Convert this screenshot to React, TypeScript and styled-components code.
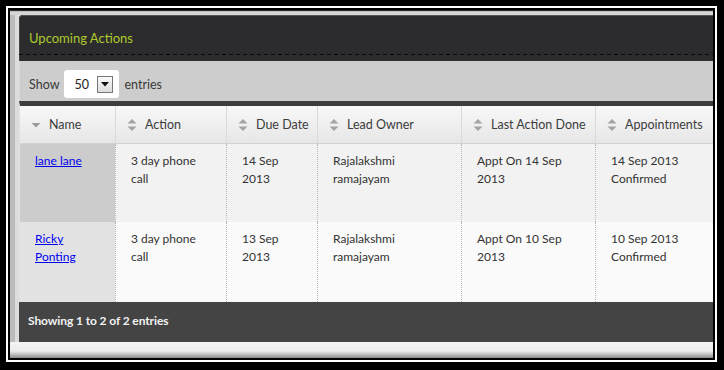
import React from 'react';
import styled, { createGlobalStyle } from 'styled-components';

const GlobalStyle = createGlobalStyle`
  html, body { margin: 0; padding: 0; background: #000; }
  body { font-family: Lato, "Noto Sans", sans-serif; }
`

const Frame = styled.div`
  width: 724px;
  height: 370px;
  box-sizing: border-box;
  padding: 6px 7px 8px 6px;
  background: #000;
`
const Bezel = styled.div`
  height: 100%;
  box-sizing: border-box;
  border: 2px solid #fff;
`
const Stage = styled.div`
  height: 100%;
  box-sizing: border-box;
  border: 2px solid #000;
  overflow: hidden;
  padding: 5px 0 0 9px;
  background:
    linear-gradient(to bottom, transparent calc(100% - 16px), #f3f3f3 calc(100% - 16px), #ececec calc(100% - 7px), #8c8c8c 100%),
    linear-gradient(to bottom, #2a2a2a 0 1px, #bdbdbd 1px 2px, #d6d6d6 2px 100%),
    linear-gradient(90deg, #bcbcbc 0 5px, #dcdcdc 5px 100%);
  background-size: 100% 100%, 100% 5px, 100% 100%;
  background-repeat: no-repeat;
`
const Panel = styled.div`
  width: 706px;
  height: 327px;
  display: flex;
  flex-direction: column;
  background: #f2f2f2;
`
const Header = styled.div`
  height: 46px;
  box-sizing: border-box;
  padding: 0 0 0 10px;
  display: flex;
  flex-direction: column;
  border-radius: 4px 4px 0 0;
  background: #2c2c2f;
  box-shadow: inset 0 1px 0 #555, inset 1px 0 0 #444;
`
const TitleRow = styled.div`
  height: 39px;
  display: flex;
  align-items: center;
  padding-top: 7px;
  box-sizing: border-box;
`
const Title = styled.div`
  color: #adc92b;
  font-size: 13px;
`
const Dashes = styled.div`
  height: 1px;
  margin-left: -10px;
  background: repeating-linear-gradient(90deg, #0a0a0a 0 4px, transparent 4px 7px);
`
const Toolbar = styled.div`
  height: 40px;
  box-sizing: border-box;
  padding: 9px 0 3px 9px;
  display: flex;
  align-items: center;
  gap: 5px;
  background: #cdcdcd;
  border-left: 1px solid #d9d9d9;
  color: #3a3a3a;
  font-size: 12.5px;
`
const Select = styled.div`
  width: 55px;
  height: 28px;
  box-sizing: border-box;
  padding: 0 6px 0 10px;
  display: flex;
  align-items: center;
  justify-content: space-between;
  background: #fff;
  border-radius: 3px;
  color: #222;
  font-size: 12.5px;
`
const SelectButton = styled.div`
  width: 16px;
  height: 17px;
  box-sizing: border-box;
  border: 1px solid #777;
  background: linear-gradient(#fafafa, #dcdcdc);
  display: flex;
  align-items: center;
  justify-content: center;
`
const Table = styled.table`
  width: 705px;
  table-layout: fixed;
  border-spacing: 0;
  border-top: 5px solid #3d3d3d;
  border-left: 1px solid #e2e2e2;
  font-size: 12px;
`
const HeadCell = styled.th`
  height: 38px;
  box-sizing: border-box;
  padding: 0 0 0 11px;
  text-align: left;
  font-weight: normal;
  font-size: 12.5px;
  color: #3c3c3c;
  white-space: nowrap;
  background: linear-gradient(#f8f8f8, #e6e6e6);
  border-bottom: 1px solid #d2d2d2;
  & + & { border-left: 1px solid #dadada; }
`
const HeadInner = styled.div`
  display: flex;
  align-items: center;
  gap: 8px;
`
const Cell = styled.td<{ $sorted?: boolean; $odd?: boolean }>`
  height: ${p => (p.$odd ? 78 : 80)}px;
  box-sizing: border-box;
  vertical-align: top;
  padding: 8px 10px 0 15px;
  line-height: 18px;
  color: #333;
  background: ${p => (p.$sorted ? (p.$odd ? '#cccccc' : '#e2e2e2') : p.$odd ? '#f2f2f2' : '#fafafa')};
  & + & { border-left: 1px dotted #b8b8b8; }
`
const NameLink = styled.a`
  color: #0000ee;
  text-decoration: underline;
`
const Footer = styled.div`
  height: 40px;
  box-sizing: border-box;
  padding: 10px 0 0 9px;
  line-height: 18px;
  background: #444;
  color: #f2f2f2;
  font-size: 12px;
  font-weight: bold;
  letter-spacing: -0.1px;
`

const SortBoth = () => (
  <svg width="10" height="14" viewBox="0 0 10 14">
    <path d="M0.5 5.5 L5 1 L9.5 5.5 Z" fill="#a4a4a4" />
    <path d="M0.5 8.5 L5 13 L9.5 8.5 Z" fill="#a4a4a4" />
  </svg>
)

const SortDesc = () => (
  <svg width="10" height="14" viewBox="0 0 10 14">
    <path d="M0.5 5 L5 9.5 L9.5 5 Z" fill="#9c9c9c" />
  </svg>
)

const columns = [
  { label: 'Name', width: 95, sorted: true },
  { label: 'Action', width: 111 },
  { label: 'Due Date', width: 91 },
  { label: 'Lead Owner', width: 144 },
  { label: 'Last Action Done', width: 134 },
  { label: 'Appointments', width: 130 },
]

const rows = [
  ['lane lane', '3 day phone call', '14 Sep 2013', 'Rajalakshmi ramajayam', 'Appt On 14 Sep 2013', '14 Sep 2013 Confirmed'],
  ['Ricky Ponting', '3 day phone call', '13 Sep 2013', 'Rajalakshmi ramajayam', 'Appt On 10 Sep 2013', '10 Sep 2013 Confirmed'],
]

export default function App() {
  return (
    <Frame>
      <GlobalStyle />
      <Bezel>
        <Stage>
          <Panel>
            <Header>
              <TitleRow>
                <Title>Upcoming Actions</Title>
              </TitleRow>
              <Dashes />
            </Header>
            <Toolbar>
              <span>Show</span>
              <Select>
                <span>50</span>
                <SelectButton>
                  <svg width="8" height="5" viewBox="0 0 8 5">
                    <path d="M0 0 L8 0 L4 4.5 Z" fill="#111" />
                  </svg>
                </SelectButton>
              </Select>
              <span>entries</span>
            </Toolbar>
            <Table>
              <colgroup>
                {columns.map(c => <col key={c.label} style={{ width: c.width }} />)}
              </colgroup>
              <thead>
                <tr>
                  {columns.map(c => (
                    <HeadCell key={c.label}>
                      <HeadInner>
                        {c.sorted ? <SortDesc /> : <SortBoth />}
                        <span>{c.label}</span>
                      </HeadInner>
                    </HeadCell>
                  ))}
                </tr>
              </thead>
              <tbody>
                {rows.map((r, i) => (
                  <tr key={i}>
                    {r.map((v, j) => (
                      <Cell key={j} $sorted={j === 0} $odd={i === 0}>
                        {j === 0 ? <NameLink href="#">{v}</NameLink> : v}
                      </Cell>
                    ))}
                  </tr>
                ))}
              </tbody>
            </Table>
            <Footer>Showing 1 to 2 of 2 entries</Footer>
          </Panel>
        </Stage>
      </Bezel>
    </Frame>
  )
}
